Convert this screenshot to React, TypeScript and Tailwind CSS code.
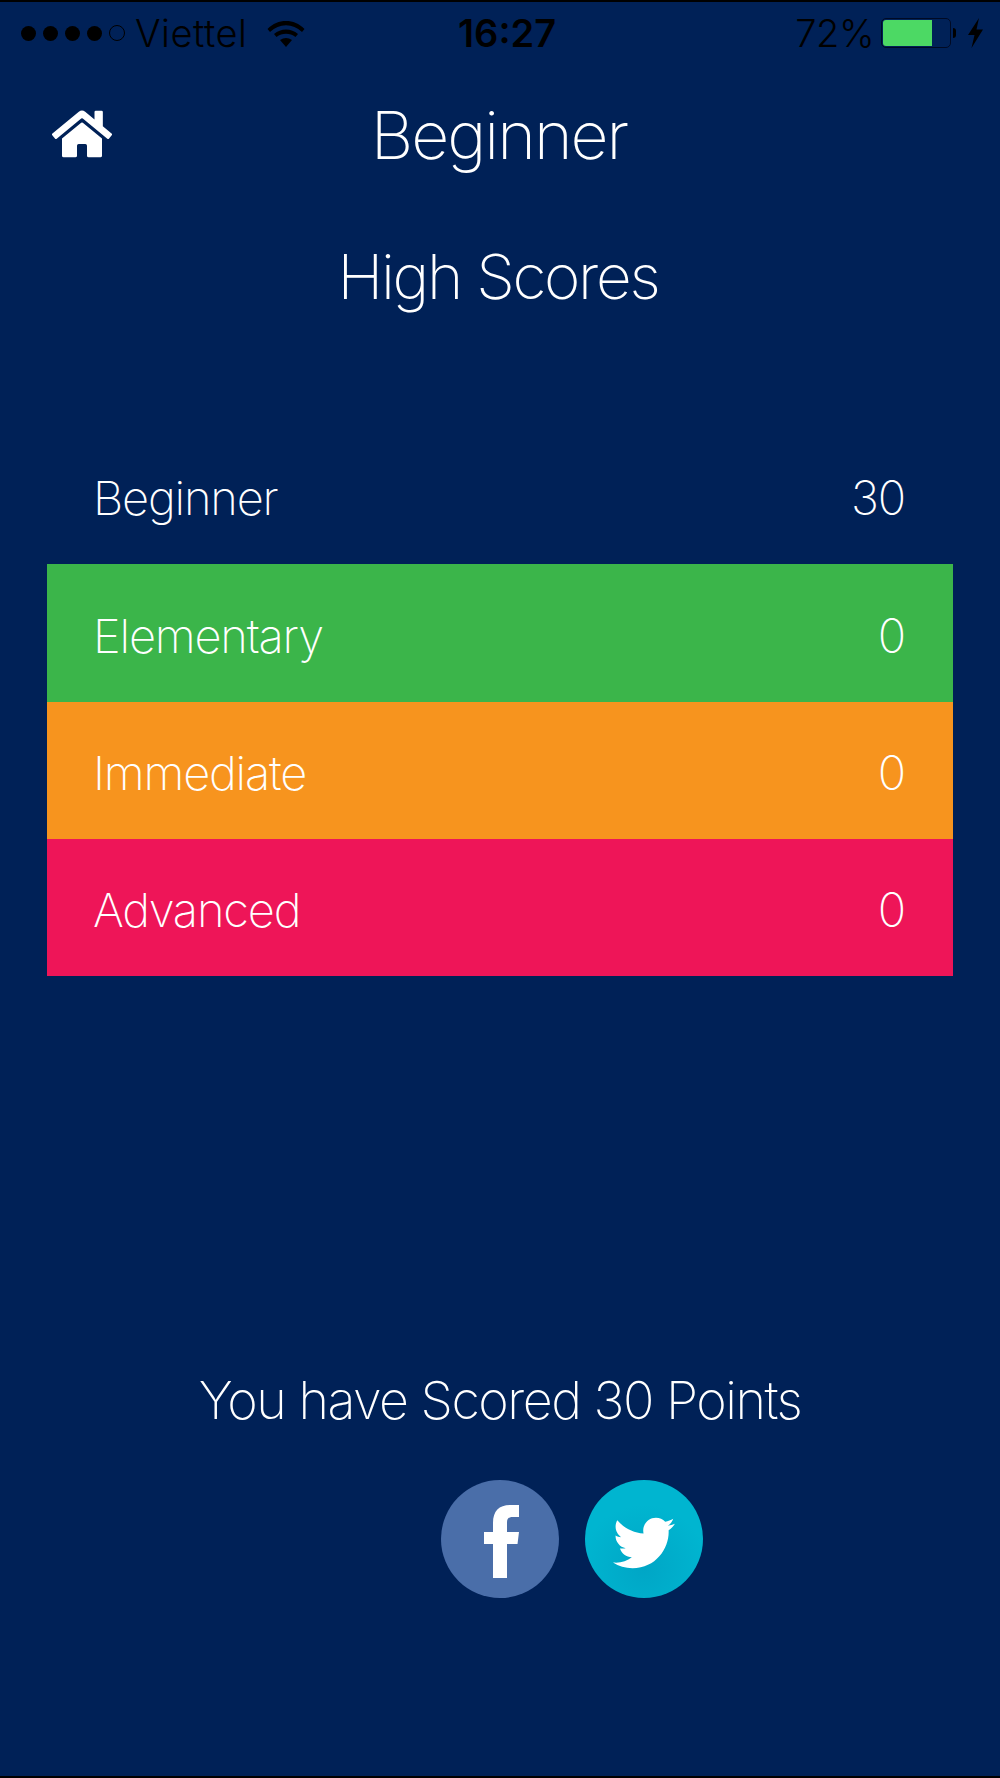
import { FaHome, FaTwitter } from "react-icons/fa";

const SCORES = [
  { name: "Beginner", score: 30, bg: "" },
  { name: "Elementary", score: 0, bg: "bg-[#3bb54a]" },
  { name: "Immediate", score: 0, bg: "bg-[#f7941e]" },
  { name: "Advanced", score: 0, bg: "bg-[#ee1558]" },
];

function StatusBar() {
  return (
    <div className="flex h-[64px] items-center border-t-2 border-black pl-[21px] pr-[16px] text-[38px] leading-none text-black">
      <div className="flex w-[400px] items-center">
        <div className="flex items-center gap-[7px]">
          <span className="h-[15px] w-[15px] rounded-full bg-black" />
          <span className="h-[15px] w-[15px] rounded-full bg-black" />
          <span className="h-[15px] w-[15px] rounded-full bg-black" />
          <span className="h-[15px] w-[15px] rounded-full bg-black" />
          <span className="h-[16px] w-[16px] rounded-full border border-black" />
        </div>
        <span className="ml-[10px] font-light tracking-[0.500px]">Viettel</span>
        <svg className="ml-[20px]" width="38" height="28" viewBox="0 0 38 28" fill="black">
          <path d="M19 2C26 2 32 4.500 37.500 10L35 13C30 8.500 25 6.300 19 6.300C13 6.300 8 8.500 3 13L0.500 10C6 4.500 12 2 19 2Z" />
          <path d="M19 10.500C23.500 10.500 27.500 12 31 15L28.500 18C25.500 15.800 22.500 14.700 19 14.700C15.500 14.700 12.500 15.800 9.500 18L7 15C10.500 12 14.500 10.500 19 10.500Z" />
          <path d="M19 19C21 19 23 19.700 25 21L19 28L13 21C15 19.700 17 19 19 19Z" />
        </svg>
      </div>
      <span className="ml-[37px] font-semibold">16:27</span>
      <div className="ml-auto flex items-center">
        <span className="font-light tracking-[-0.500px]">72%</span>
        <div className="ml-[7px] flex h-[30px] w-[70px] rounded-[5px] border border-[#000a24] p-[1px]">
          <div className="h-full w-[49px] rounded-l-[3px] bg-[#4cd964]" />
        </div>
        <span className="ml-[2px] h-[10px] w-[3px] rounded-r-full bg-black" />
        <svg className="ml-[11px]" width="17" height="30" viewBox="0 0 17 30" fill="black">
          <path d="M12 0L1 17H7.500L4.500 30L16 11.500H9.500Z" />
        </svg>
      </div>
    </div>
  );
}

export default function App() {
  return (
    <div className="h-[1778px] w-[1000px] overflow-hidden border-b-2 border-black bg-[#002157] font-['Inter',sans-serif] font-[150] text-white">
      <StatusBar />
      <header className="grid h-[144px] grid-cols-[1fr_auto_1fr] items-center pb-[2px] pl-[52px]">
        <FaHome className="mb-[3px] h-[60px] w-[60px]" />
        <h1 className="pr-[54px] text-[66px] leading-none tracking-[-2px]">Beginner</h1>
      </header>
      <h2 className="mt-[38px] pr-[4px] text-center text-[62px] leading-none tracking-[-2.300px]">High Scores</h2>
      <div className="mx-[47px] mt-[119px]">
        {SCORES.map((row) => (
          <div key={row.name} className={`flex h-[137.3px] items-center justify-between pl-[46px] pr-[48px] pt-[6px] text-[47px] tracking-[-1.200px] ${row.bg}`}>
            <span>{row.name}</span>
            <span>{row.score}</span>
          </div>
        ))}
      </div>
      <p className="mt-[399px] text-center text-[52px] leading-none tracking-[-1.500px]">You have Scored 30 Points</p>
      <div className="mt-[53px] flex justify-center gap-[26px] pl-[144px]">
        <div className="flex h-[118px] w-[118px] items-center justify-center rounded-full bg-[#4a6ea9] pl-[4px] pt-[4px]">
          <svg width="36" height="73" viewBox="0 0 36 73" fill="white">
            <path d="M9 73V39H0V27H9V18C9 6 15 0 26 0H35V12H29C24 12 23 14 23 18V27H35L33.500 39H23V73Z" />
          </svg>
        </div>
        <div className="flex h-[118px] w-[118px] items-center justify-center rounded-full bg-[radial-gradient(circle_at_50%_75%,#00a6c6,#00b5d0_60%)] pt-[7px]">
          <FaTwitter className="h-[62px] w-[62px]" />
        </div>
      </div>
    </div>
  );
}
